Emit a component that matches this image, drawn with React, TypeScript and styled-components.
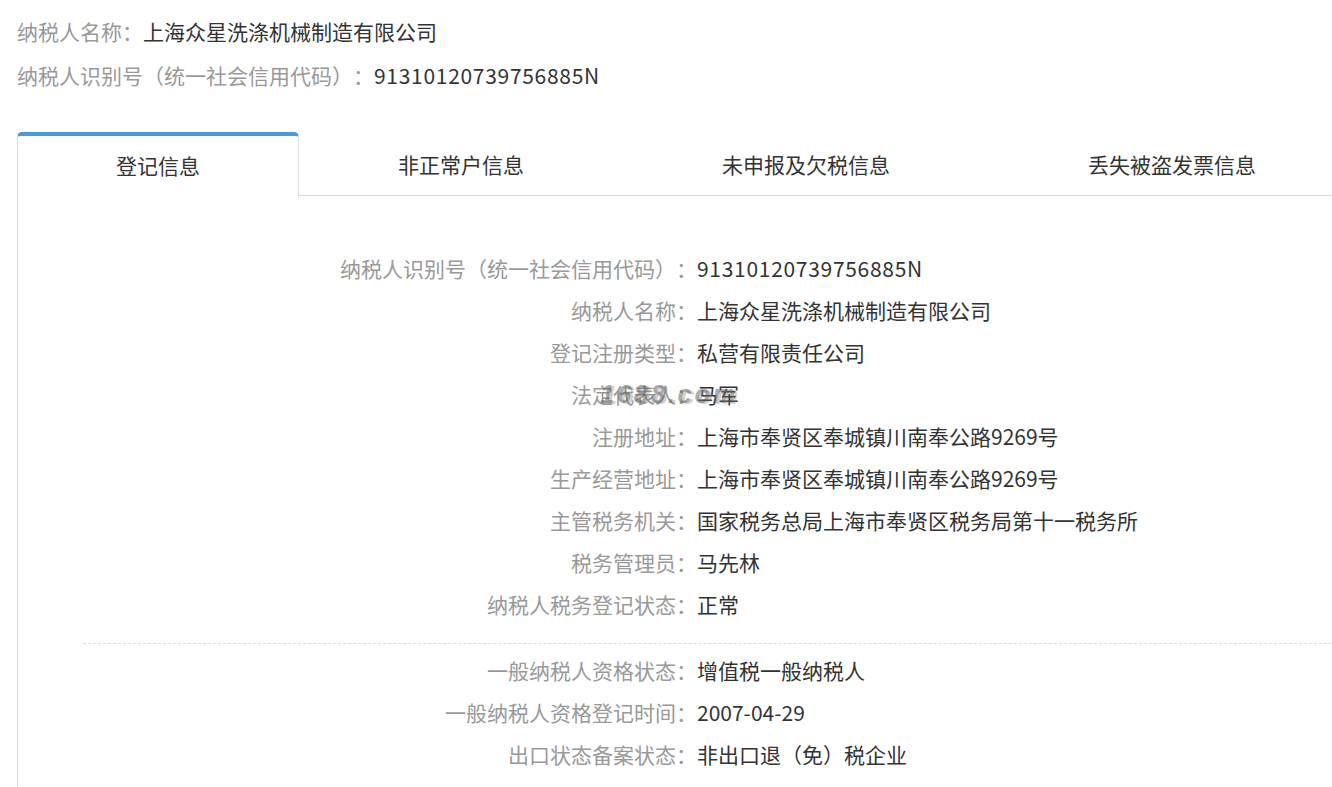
import styled, { createGlobalStyle } from 'styled-components'

const GlobalStyle = createGlobalStyle`
  html, body {
    margin: 0;
    padding: 0;
    background: #fff;
  }
  body {
    font-family: 'Noto Sans CJK SC', 'Noto Sans', sans-serif;
    color: #333;
    text-spacing-trim: space-all;
  }
`

const Page = styled.div`
  padding: 9px 0 0 17px;
  width: 1332px;
  box-sizing: border-box;
  overflow: hidden;
`

const Summary = styled.div`
  display: flex;
  flex-direction: column;
`

const SummaryLine = styled.div`
  display: flex;
  font-size: 21px;
  line-height: 44px;
`

const Label = styled.span`
  color: #999;
  white-space: nowrap;
`

const Value = styled.span`
  color: #333;
  white-space: nowrap;
`

const Tabs = styled.div`
  display: flex;
  margin-top: 35px;
  border-bottom: 1px solid #ddd;
  height: 64px;
  box-sizing: border-box;
`

const Tab = styled.div<{ $active?: boolean }>`
  display: flex;
  align-items: center;
  justify-content: center;
  padding: 0 98px 3px 98px;
  font-size: 21px;
  color: #333;
  white-space: nowrap;
  box-sizing: border-box;
  height: ${(p) => (p.$active ? '65px' : '63px')};
  background: #fff;
  border: 1px solid ${(p) => (p.$active ? '#ddd' : 'transparent')};
  border-top: ${(p) => (p.$active ? '4px solid #4a9ad8' : '1px solid transparent')};
  border-bottom: none;
  border-radius: ${(p) => (p.$active ? '5px 5px 0 0' : '0')};
  padding-top: ${(p) => (p.$active ? '0' : '2px')};
`

const Panel = styled.div`
  border-left: 1px solid #ddd;
  padding: 51px 0 40px 0;
  position: relative;
`

const InfoList = styled.div`
  display: grid;
  grid-template-columns: 679px 1fr;
  font-size: 21px;
  line-height: 42px;
`

const InfoLabel = styled.div`
  color: #999;
  text-align: right;
  white-space: nowrap;
  position: relative;
`

const InfoValue = styled.div`
  color: #333;
  white-space: nowrap;
`

const Divider = styled.div`
  grid-column: 1 / -1;
  margin: 18px 0 5px 65px;
  border-top: 1px dashed #ddd;
`

const Digits = styled.span`
  letter-spacing: 0.7px;
`

const Watermark = styled.span`
  position: absolute;
  right: -41px;
  top: 0;
  font-family: 'Liberation Sans', sans-serif;
  font-style: italic;
  font-weight: bold;
  font-size: 25px;
  letter-spacing: 3px;
  color: rgba(100, 100, 100, 0.55);
  text-shadow: 3px 1px 1px rgba(130, 130, 130, 0.4);
  pointer-events: none;
`

const tabs = ['登记信息', '非正常户信息', '未申报及欠税信息', '丢失被盗发票信息']

const firstRows: [string, string][] = [
  ['纳税人识别号（统一社会信用代码）：', '91310120739756885N'],
  ['纳税人名称：', '上海众星洗涤机械制造有限公司'],
  ['登记注册类型：', '私营有限责任公司'],
  ['法定代表人：', '马军'],
  ['注册地址：', '上海市奉贤区奉城镇川南奉公路9269号'],
  ['生产经营地址：', '上海市奉贤区奉城镇川南奉公路9269号'],
  ['主管税务机关：', '国家税务总局上海市奉贤区税务局第十一税务所'],
  ['税务管理员：', '马先林'],
  ['纳税人税务登记状态：', '正常'],
]

const secondRows: [string, string][] = [
  ['一般纳税人资格状态：', '增值税一般纳税人'],
  ['一般纳税人资格登记时间：', '2007-04-29'],
  ['出口状态备案状态：', '非出口退（免）税企业'],
]

const App = () => {
  return (
    <>
      <GlobalStyle />
      <Page>
        <Summary>
          <SummaryLine>
            <Label>纳税人名称：</Label>
            <Value>上海众星洗涤机械制造有限公司</Value>
          </SummaryLine>
          <SummaryLine>
            <Label>纳税人识别号（统一社会信用代码）：</Label>
            <Value>
              <Digits>91310120739756885N</Digits>
            </Value>
          </SummaryLine>
        </Summary>

        <Tabs>
          {tabs.map((t, i) => (
            <Tab key={t} $active={i === 0}>
              {t}
            </Tab>
          ))}
        </Tabs>

        <Panel>
          <InfoList>
            {firstRows.map(([label, value]) => (
              <>
                <InfoLabel key={label}>
                  {label}
                  {label === '法定代表人：' && <Watermark>1688.com</Watermark>}
                </InfoLabel>
                <InfoValue key={label + '-v'}>
                  {/^[0-9A-Z]+$/.test(value) ? <Digits>{value}</Digits> : value}
                </InfoValue>
              </>
            ))}
            <Divider />
            {secondRows.map(([label, value]) => (
              <>
                <InfoLabel key={label}>{label}</InfoLabel>
                <InfoValue key={label + '-v'}>{value}</InfoValue>
              </>
            ))}
          </InfoList>
        </Panel>
      </Page>
    </>
  )
}

export default App
